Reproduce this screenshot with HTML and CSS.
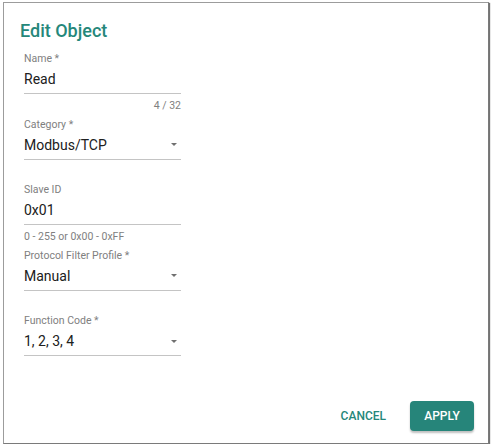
FILE: index.html
```html
<!DOCTYPE html>
<html lang="en">

<head>
    <meta charset="UTF-8">
    <meta name="viewport" content="width=device-width, initial-scale=1.0">
    <title>Edit Object</title>
    <link rel="stylesheet" href="styles.css">
</head>

<body>
    <div class="dialog">
        <h2 class="dialog-title">Edit Object</h2>
        <div class="dialog-content">
            <div class="field">
                <label class="field-label">Name *</label>
                <div class="field-control"><span class="field-value">Read</span></div>
                <div class="field-hint hint-right">4 / 32</div>
            </div>
            <div class="field">
                <label class="field-label">Category *</label>
                <div class="field-control"><span class="field-value">Modbus/TCP</span><span class="select-arrow"></span></div>
            </div>
            <div class="field">
                <label class="field-label">Slave ID</label>
                <div class="field-control"><span class="field-value">0x01</span></div>
                <div class="field-hint">0 - 255 or 0x00 - 0xFF</div>
            </div>
            <div class="field">
                <label class="field-label">Protocol Filter Profile *</label>
                <div class="field-control"><span class="field-value">Manual</span><span class="select-arrow"></span></div>
            </div>
            <div class="field">
                <label class="field-label">Function Code *</label>
                <div class="field-control"><span class="field-value">1, 2, 3, 4</span><span class="select-arrow"></span></div>
            </div>
        </div>
        <div class="dialog-actions">
            <button class="btn btn-text">CANCEL</button>
            <button class="btn btn-raised">APPLY</button>
        </div>
    </div>
</body>

</html>
```

FILE: styles.css
```css
body {
    margin: 0;
    padding: 0;
    background: #ffffff;
    font-family: Roboto, "Liberation Sans", sans-serif;
}

.dialog {
    display: flex;
    flex-direction: column;
    box-sizing: border-box;
    width: 486px;
    height: 442px;
    margin: 2px 0 0 3px;
    padding: 16px 14px 12px 16px;
    background: #ffffff;
    border: 1px solid #9c9c9c;
    border-right-color: #7a7a7a;
    border-bottom-color: #7a7a7a;
    box-shadow: 1px 1px 1px rgba(0, 0, 0, 0.55);
}

.dialog-title {
    margin: 0 0 9px 0;
    font-size: 18px;
    line-height: 24px;
    font-weight: 500;
    color: #25877a;
}

.dialog-content {
    margin-left: 4px;
}

.field {
    box-sizing: border-box;
    width: 157px;
    height: 65.5px;
}

.field-label {
    display: block;
    margin-bottom: 3px;
    font-size: 10.5px;
    line-height: 14px;
    color: #808080;
}

.field-control {
    display: flex;
    align-items: center;
    padding-bottom: 4px;
    border-bottom: 1px solid #c4c4c4;
}

.field-value {
    flex: 1;
    font-size: 14px;
    line-height: 20px;
    color: #202020;
}

.select-arrow {
    width: 0;
    height: 0;
    margin-right: 4px;
    border-left: 3.5px solid transparent;
    border-right: 3.5px solid transparent;
    border-top: 3.5px solid #707070;
}

.field-hint {
    margin-top: 4.5px;
    font-size: 10.5px;
    line-height: 14px;
    color: #808080;
}

.hint-right {
    text-align: right;
}

.dialog-actions {
    display: flex;
    justify-content: flex-end;
    align-items: center;
    gap: 13px;
    margin-top: auto;
}

.btn {
    height: 30px;
    border: none;
    border-radius: 4px;
    font-family: Roboto, "Liberation Sans", sans-serif;
    font-size: 12px;
    font-weight: 500;
    cursor: pointer;
}

.btn-text {
    padding: 0 11px;
    background: none;
    color: #25877a;
}

.btn-raised {
    width: 64px;
    padding: 0;
    background: #26857a;
    color: #ffffff;
    box-shadow: 0 2px 2px rgba(0, 0, 0, 0.25);
}
```
